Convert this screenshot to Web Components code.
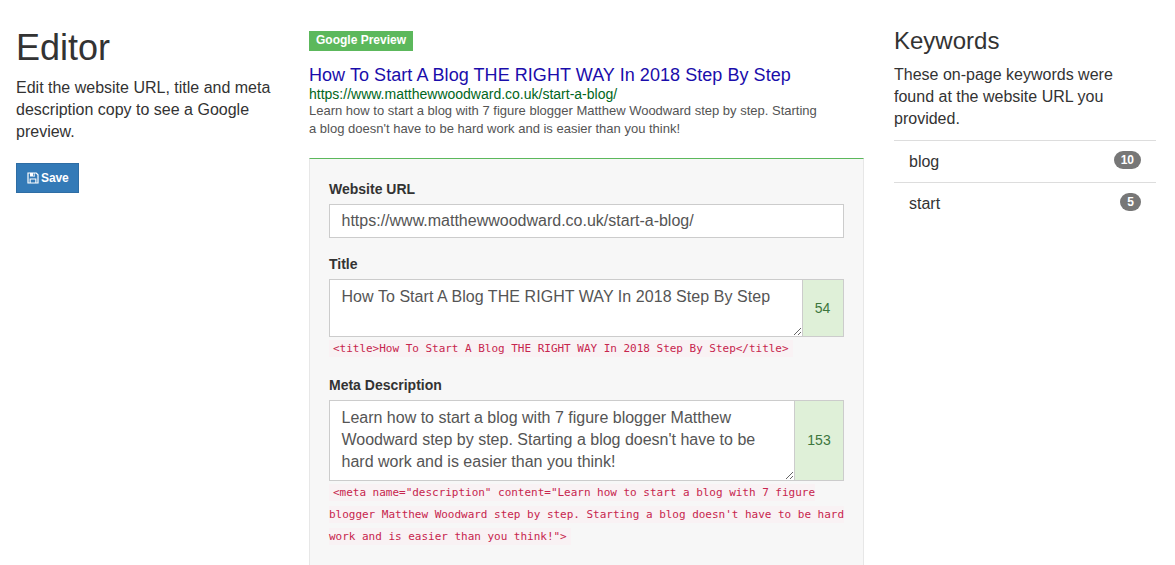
<!DOCTYPE html>
<html lang="en"><head><meta charset="utf-8"><title>Editor</title>
<style>
html,body{margin:0;height:565px;overflow:hidden;background:#fff}
body{font:16px/22px "Liberation Sans",Arial,sans-serif;color:#333}
</style></head><body>
<seo-app>
  <intro-column slot="left"></intro-column>
  <preview-column slot="middle">
    <search-snippet></search-snippet>
    <editor-panel>
      <url-field label="Website URL" value="https://www.matthewwoodward.co.uk/start-a-blog/"></url-field>
      <counted-field label="Title" count="54" rows="2" spacing="0.055px" code='&lt;title&gt;How To Start A Blog THE RIGHT WAY In 2018 Step By Step&lt;/title&gt;' value="How To Start A Blog THE RIGHT WAY In 2018 Step By Step"></counted-field>
      <counted-field label="Meta Description" count="153" rows="3" code='&lt;meta name="description" content="Learn how to start a blog with 7 figure blogger Matthew Woodward step by step. Starting a blog doesn&#39;t have to be hard work and is easier than you think!"&gt;' value="Learn how to start a blog with 7 figure blogger Matthew Woodward step by step. Starting a blog doesn't have to be hard work and is easier than you think!"></counted-field>
    </editor-panel>
  </preview-column>
  <keywords-column slot="right">
    <keyword-row count="10">blog</keyword-row>
    <keyword-row count="5">start</keyword-row>
  </keywords-column>
</seo-app>
<script>
function def(name, html, extra){
  class C extends HTMLElement{
    constructor(){super();this.attachShadow({mode:'open'}).innerHTML=typeof html==='string'?html:'';}
    connectedCallback(){ if(extra) extra.call(this,this.shadowRoot); }
  }
  customElements.define(name,C);
}
const esc=s=>(s||'').replace(/&/g,'&amp;').replace(/</g,'&lt;').replace(/>/g,'&gt;').replace(/"/g,'&quot;');

def('seo-app',`<style>
:host{display:grid;grid-template-columns:263px 555px 262px;column-gap:30px;padding:0 19px 0 16px;box-sizing:border-box;width:1175px}
</style><slot name="left"></slot><slot name="middle"></slot><slot name="right"></slot>`);

def('intro-column',`<style>
:host{display:block;padding-top:28px}
h1{font-size:36px;font-weight:400;line-height:39px;margin:0 0 10px}
p{margin:0 0 20px}
button{display:flex;align-items:center;gap:2px;height:30px;width:63px;box-sizing:border-box;padding:0 0 0 10px;background:#337ab7;border:1px solid #2e6da4;border-radius:0;color:#fff;font:bold 12px/18px "Liberation Sans",Arial,sans-serif;letter-spacing:-.1px}
svg{display:block}
</style><h1>Editor</h1><p>Edit the website URL, title and meta description copy to see a Google preview.</p>
<button type="button"><svg width="12" height="12" viewBox="0 0 12 12"><path fill="none" stroke="#fff" stroke-width="1.2" d="M1 1h8.2L11 2.8V11H1z"/><path fill="#fff" d="M3 1h5v3.4H3zM2.6 6.4h6.8V11H2.6z"/><path fill="#337ab7" d="M6.2 1.5h1.2v2.3H6.2zM3.7 7.5h4.6v3H3.7z"/></svg>Save</button>`);

def('preview-column',`<style>:host{display:block;padding-top:31px;min-width:0}</style><slot></slot>`);

def('search-snippet',`<style>
:host{display:block}
.tag{display:block;width:104px;height:20px;background:#5cb85c;color:#fff;font:bold 12px/18px "Liberation Sans",Arial,sans-serif;text-align:center}
.t{font-size:18px;line-height:22px;color:#1a0dab;margin-top:13px;letter-spacing:.055px}
.u{font-size:14px;line-height:16px;color:#006621}
.d{font-size:13px;line-height:18px;color:#545454;width:515px}
</style><span class="tag">Google Preview</span>
<div class="t">How To Start A Blog THE RIGHT WAY In 2018 Step By Step</div>
<div class="u">https://www.matthewwoodward.co.uk/start-a-blog/</div>
<div class="d">Learn how to start a blog with 7 figure blogger Matthew Woodward step by step. Starting a blog doesn't have to be hard work and is easier than you think!</div>`);

def('editor-panel',`<style>
:host{display:block;margin-top:20px;background:#f7f7f7;border:1px solid #e7e7e7;border-top-color:#5cb85c;padding:20px 19px 40px;height:500px;box-sizing:border-box}
</style><slot></slot>`);

const labelCss=`label{display:block;font-size:14px;font-weight:700;line-height:20px;margin-bottom:5px}`;
const ctlCss=`box-sizing:border-box;border:1px solid #ccc;border-radius:0;background:#fff;color:#555;font:16px/22px "Liberation Sans",Arial,sans-serif;outline:none;margin:0;`;

def('url-field',null,function(r){
  r.innerHTML=`<style>:host{display:block;margin-bottom:16px}${labelCss}
  input{display:block;width:100%;height:34px;padding:6px 11.5px;${ctlCss}}</style>
  <label>${esc(this.getAttribute('label'))}</label><input type="text" value="${esc(this.getAttribute('value'))}">`;
});

def('counted-field',null,function(r){
  const rows=+this.getAttribute('rows');
  const sp=this.getAttribute('spacing')||'normal';
  r.innerHTML=`<style>:host{display:block;margin-bottom:15px}${labelCss}
  .g{display:flex}
  textarea{flex:1;min-width:0;display:block;padding:6px 11.5px;height:${rows===2?58:81}px;resize:vertical;letter-spacing:${sp};${ctlCss}}
  .n{flex:none;box-sizing:border-box;width:${rows===2?41:49}px;padding:0 ${rows===2?1:0}px ${rows===2?0:1}px 0;display:flex;align-items:center;justify-content:center;font-size:14px;background:#dff0d8;color:#3c763d;border:1px solid #ccc;border-left:0}
  .c{margin-top:1px;font:11px/22px "DejaVu Sans Mono",monospace;letter-spacing:-.02px}
  code{font:inherit;color:#c7254e;background:#f9f2f4;padding:2px 4px}
  </style><label>${esc(this.getAttribute('label'))}</label>
  <div class="g"><textarea>${esc(this.getAttribute('value'))}</textarea><div class="n">${esc(this.getAttribute('count'))}</div></div>
  <div class="c"><code>${esc(this.getAttribute('code'))}</code></div>`;
});

def('keywords-column',`<style>
:host{display:block;padding-top:28px}
h2{font-size:24px;font-weight:400;line-height:26px;margin:0 0 10px}
p{margin:0 0 10px}
</style><h2>Keywords</h2><p>These on-page keywords were found at the website URL you provided.</p><slot></slot>`);

def('keyword-row',null,function(r){
  r.innerHTML=`<style>
  :host{display:flex;align-items:center;justify-content:space-between;height:42px;box-sizing:border-box;border-top:1px solid #ddd;padding:0 15px}
  b{display:block;min-width:7px;padding:3px 7px;font:bold 12px/12px "Liberation Sans",Arial,sans-serif;color:#fff;background:#777;border-radius:10px;margin-top:-3px;text-align:center}
  </style><span><slot></slot></span><b>${esc(this.getAttribute('count'))}</b>`;
});
</script>
</body></html>
